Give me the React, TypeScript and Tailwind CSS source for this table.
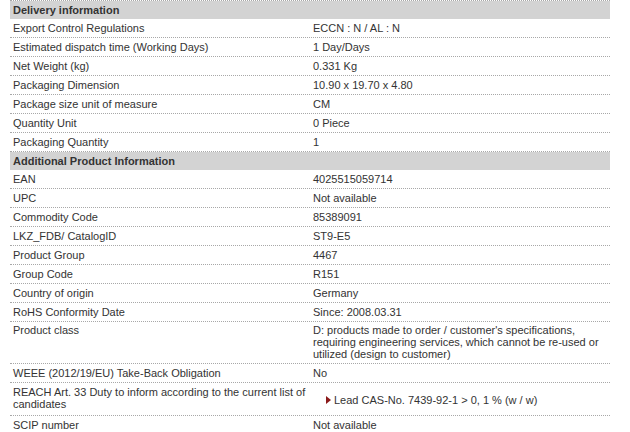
import React from "react";

type Row = { label: React.ReactNode; value: React.ReactNode; kind?: "tall3" | "reach" };

const delivery: Row[] = [
  { label: "Export Control Regulations", value: "ECCN : N / AL : N" },
  { label: "Estimated dispatch time (Working Days)", value: "1 Day/Days" },
  { label: "Net Weight (kg)", value: "0.331 Kg" },
  { label: "Packaging Dimension", value: "10.90 x 19.70 x 4.80" },
  { label: "Package size unit of measure", value: "CM" },
  { label: "Quantity Unit", value: "0 Piece" },
  { label: "Packaging Quantity", value: "1" },
];

const additional: Row[] = [
  { label: "EAN", value: "4025515059714" },
  { label: "UPC", value: "Not available" },
  { label: "Commodity Code", value: "85389091" },
  { label: "LKZ_FDB/ CatalogID", value: "ST9-E5" },
  { label: "Product Group", value: "4467" },
  { label: "Group Code", value: "R151" },
  { label: "Country of origin", value: "Germany" },
  { label: "RoHS Conformity Date", value: "Since: 2008.03.31" },
  {
    label: "Product class",
    value: (
      <>
        D: products made to order / customer's specifications,
        <br />
        requiring engineering services, which cannot be re-used or
        <br />
        utilized (design to customer)
      </>
    ),
    kind: "tall3",
  },
  { label: "WEEE (2012/19/EU) Take-Back Obligation", value: "No" },
  {
    label: (
      <>
        REACH Art. 33 Duty to inform according to the current list of
        <br />
        candidates
      </>
    ),
    value: (
      <span className="flex items-center pl-[13px]">
        <svg width="5" height="8" viewBox="0 0 5 8" className="mr-[3px]">
          <path d="M0 0 L5 4 L0 8 Z" fill="#8b1a1a" />
        </svg>
        Lead CAS-No. 7439-92-1 &gt; 0, 1 % (w / w)
      </span>
    ),
    kind: "reach",
  },
  { label: "SCIP number", value: "Not available" },
];

const Header = ({ title }: { title: string }) => (
  <div className="h-[18px] bg-[#d3d3d3] flex items-center px-[3px] font-bold leading-[12px]">
    {title}
  </div>
);

const DataRow = ({ row }: { row: Row }) => {
  if (row.kind === "tall3") {
    return (
      <div className="grid grid-cols-[300px_300px] h-[42px] border-b border-dotted border-[#a8a8a8] leading-[12px]">
        <div className="px-[3px] pt-[2px]">{row.label}</div>
        <div className="px-[3px] pt-[2px]">{row.value}</div>
      </div>
    );
  }
  if (row.kind === "reach") {
    return (
      <div className="grid grid-cols-[300px_300px] h-[33px] border-b border-dotted border-[#a8a8a8] leading-[12px]">
        <div className="px-[3px] pt-[3px]">{row.label}</div>
        <div className="px-[3px] flex items-center pt-[1px]">{row.value}</div>
      </div>
    );
  }
  return (
    <div className="grid grid-cols-[300px_300px] h-[19px] border-b border-dotted border-[#a8a8a8] leading-[12px] items-center">
      <div className="px-[3px]">{row.label}</div>
      <div className="px-[3px]">{row.value}</div>
    </div>
  );
};

export default function App() {
  return (
    <div className="w-[630px] h-[432px] overflow-hidden bg-white">
      <div
        className="ml-[10px] w-[600px] border-t border-dotted border-[#a8a8a8] text-[11px] text-[#333]"
        style={{ fontFamily: '"Liberation Sans", Arial, sans-serif' }}
      >
        <Header title="Delivery information" />
        {delivery.map((r, i) => (
          <DataRow key={i} row={r} />
        ))}
        <Header title="Additional Product Information" />
        {additional.map((r, i) => (
          <DataRow key={i} row={r} />
        ))}
      </div>
    </div>
  );
}
